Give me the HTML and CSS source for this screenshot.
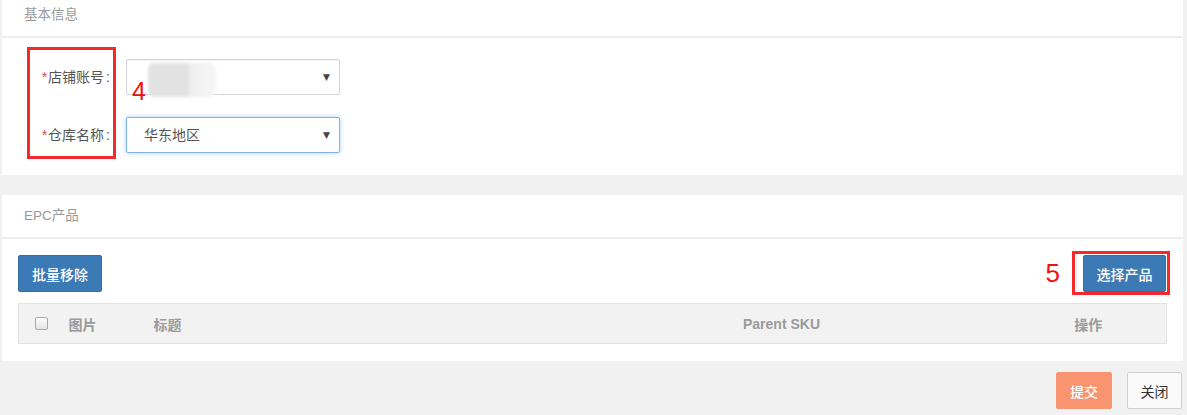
FILE: index.html
```html
<!DOCTYPE html>
<html lang="zh">
<head>
<meta charset="utf-8">
<title>EPC</title>
<link rel="stylesheet" href="styles.css">
</head>
<body>
<div class="page">
  <section class="panel panel-first">
    <div class="panel-head">基本信息</div>
    <div class="panel-body form-body">
      <div class="form-grid">
        <label class="form-label"><span class="req">*</span>店铺账号<span class="colon">:</span></label>
        <div class="select">
          <span class="select-value"><span class="redact"></span></span>
          <span class="caret">▼</span>
        </div>
        <label class="form-label"><span class="req">*</span>仓库名称<span class="colon">:</span></label>
        <div class="select select-focus">
          <span class="select-value">华东地区</span>
          <span class="caret">▼</span>
        </div>
      </div>
      <div class="mark-box mark-box-4"></div>
      <div class="mark-num mark-num-4">4</div>
    </div>
  </section>

  <section class="panel panel-second">
    <div class="panel-head">EPC产品</div>
    <div class="panel-body table-body">
      <div class="toolbar">
        <button class="btn btn-primary">批量移除</button>
        <div class="toolbar-right">
          <span class="mark-num mark-num-5">5</span>
          <span class="mark-wrap">
            <button class="btn btn-primary">选择产品</button>
          </span>
        </div>
      </div>
      <table class="grid">
        <colgroup>
          <col class="c-check"><col class="c-img"><col class="c-title"><col class="c-sku"><col class="c-op">
        </colgroup>
        <thead>
          <tr>
            <th class="th-check"><span class="checkbox"></span></th>
            <th>图片</th>
            <th>标题</th>
            <th class="th-center">Parent SKU</th>
            <th class="th-center">操作</th>
          </tr>
        </thead>
      </table>
    </div>
  </section>

  <div class="footer">
    <button class="btn btn-submit">提交</button>
    <button class="btn btn-default">关闭</button>
  </div>
</div>
</body>
</html>
```

FILE: styles.css
```css
* { box-sizing: border-box; }

html, body {
  margin: 0;
  padding: 0;
  background: #f1f1f1;
}

body {
  font-family: "Liberation Sans", "Noto Sans CJK SC", sans-serif;
  font-size: 14px;
  color: #555;
}

.page {
  width: 1187px;
  height: 415px;
  overflow: hidden;
}

.panel {
  background: #fff;
  margin: 0 4px 0 2px;
}

.panel-head {
  height: 44px;
  line-height: 42px;
  padding-left: 22px;
  color: #999;
  font-size: 13.5px;
  border-bottom: 2px solid #ededed;
}

.panel-first .panel-head {
  height: 38px;
  line-height: 30px;
}

.panel-second {
  margin-top: 20px;
}

.panel-body {
  position: relative;
}

/* form */
.form-body {
  padding: 21px 0 22px 0;
}

.form-grid {
  display: grid;
  grid-template-columns: 108px 214px;
  column-gap: 16px;
  row-gap: 22px;
}

.form-label {
  text-align: right;
  line-height: 36px;
  color: #555;
  font-size: 14px;
}

.req {
  color: #e5474a;
  margin-right: 1px;
}

.colon {
  margin-left: 2px;
}

.select {
  position: relative;
  height: 36px;
  border: 1px solid #d4d4d4;
  border-radius: 2px;
  background: #fff;
  box-shadow: inset 0 1px 1px rgba(0,0,0,0.05);
  display: flex;
  align-items: center;
  justify-content: space-between;
  padding: 0 9px 0 17px;
  color: #555;
}

.select-focus {
  border-color: #7fb3e3;
  box-shadow: 0 0 5px rgba(102,175,233,0.55);
}

.select-value {
  position: relative;
  line-height: 20px;
}

.caret {
  font-size: 9px;
  color: #444;
  font-family: "DejaVu Sans", sans-serif;
}

.redact {
  position: absolute;
  left: 4px;
  top: -14px;
  width: 68px;
  height: 34px;
  border-radius: 6px;
  background: linear-gradient(90deg, #e2e2e2 0%, #e2e2e2 60%, #efefef 62%, #f6f6f6 100%);
  filter: blur(1.5px);
}

/* annotations */
.mark-box {
  position: absolute;
  border: 3px solid #f5292c;
  pointer-events: none;
}

.mark-box-4 {
  left: 25px;
  top: 9px;
  width: 89px;
  height: 112px;
}

.mark-num {
  color: #f01010;
  font-family: "Liberation Sans", sans-serif;
  font-size: 25px;
  line-height: 25px;
}

.mark-num-4 {
  position: absolute;
  left: 130px;
  top: 41px;
}

/* table panel */
.table-body {
  padding: 16px 17px 17px 16px;
}

.toolbar {
  display: flex;
  justify-content: space-between;
  align-items: center;
  height: 37px;
}

.toolbar-right {
  display: flex;
  align-items: center;
  gap: 12px;
}

.mark-num-5 {
  font-size: 26px;
}

.mark-wrap {
  display: inline-flex;
  padding: 1px 1px 0 8px;
  border: 3px solid #f5292c;
  margin: -4px -4px -3px 0;
}

.btn {
  font-family: "Liberation Sans", "Noto Sans CJK SC", sans-serif;
  font-size: 14px;
  height: 37px;
  border-radius: 2px;
  cursor: pointer;
  padding: 0 13px;
}

.btn-primary {
  background: #3b7ab4;
  border: 1px solid #346ea4;
  color: #fff;
  font-weight: 500;
  padding: 0 13px;
}

.toolbar-right .btn-primary {
  width: 83px;
  height: 37px;
  padding: 0;
}

.grid {
  margin-top: 11px;
  width: 100%;
  border-collapse: collapse;
  table-layout: fixed;
  background: #f2f2f2;
  border: 1px solid #e2e2e2;
}

.c-check { width: 40px; }
.c-img { width: 85px; }
.c-title { width: 409px; }
.c-sku { width: 458px; }
.c-op { width: 156px; }

.grid th {
  height: 40px;
  text-align: left;
  font-weight: bold;
  color: #9a9a9a;
  font-size: 14px;
  padding: 0 0 0 10px;
}

.grid th.th-check {
  padding: 0 0 0 16px;
}

.grid th.th-center {
  text-align: center;
  padding: 0;
}

.checkbox {
  display: block;
  width: 13px;
  height: 13px;
  border: 1px solid #a8a8a8;
  border-radius: 2px;
  background: linear-gradient(#fcfcfc, #e4e4e4);
}

/* footer */
.footer {
  display: flex;
  justify-content: flex-end;
  gap: 15px;
  padding: 11px 5px 0 0;
}

.btn-submit {
  width: 56px;
  padding: 0;
  background: #f8946f;
  border: 1px solid #f8946f;
  color: #fff;
  font-weight: 500;
}

.btn-default {
  width: 55px;
  padding: 0;
  background: #fafafa;
  border: 1px solid #cfcfcf;
  color: #333;
}
```
